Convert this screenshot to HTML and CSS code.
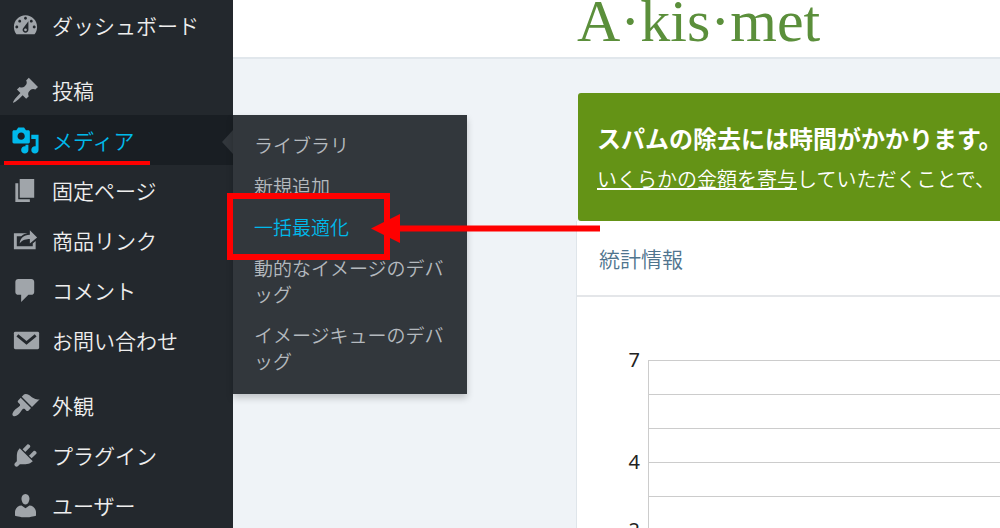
FILE: index.html
```html
<!DOCTYPE html>
<html lang="ja">
  <head>
    <meta charset="UTF-8" />
    <meta name="viewport" content="width=device-width, initial-scale=1.0" />
    <title>Akismet</title>
    <link rel="stylesheet" href="styles.css">
  </head>
  <body>
    <div class="page">
      <nav class="sidebar">
        <ul class="menu">
          <li>
            <a href="#" class="menu-link">
              <svg class="icon" viewBox="0 0 20 20"><path d="M3.76 16h12.48c1.1-1.37 1.76-3.11 1.76-5 0-4.42-3.58-8-8-8s-8 3.58-8 8c0 1.89.66 3.63 1.76 5zM10 4c.55 0 1 .45 1 1s-.45 1-1 1-1-.45-1-1 .45-1 1-1zM6 6c.55 0 1 .45 1 1s-.45 1-1 1-1-.45-1-1 .45-1 1-1zm8 0c.55 0 1 .45 1 1s-.45 1-1 1-1-.45-1-1 .45-1 1-1zm-5.37 5.55L12 7v6c0 1.1-.9 2-2 2s-2-.9-2-2c0-.57.24-1.08.63-1.45zM4 10c.55 0 1 .45 1 1s-.45 1-1 1-1-.45-1-1 .45-1 1-1zm12 0c.55 0 1 .45 1 1s-.45 1-1 1-1-.45-1-1 .45-1 1-1zm-5 3c0-.55-.45-1-1-1s-1 .45-1 1 .45 1 1 1 1-.45 1-1z" /></svg>
              ダッシュボード
            </a>
          </li>
          <li class="separator"></li>
          <li>
            <a href="#" class="menu-link">
              <svg class="icon" viewBox="0 0 20 20"><path d="M10.44 3.02l1.82-1.82 6.36 6.35-1.83 1.82c-1.05-.68-2.48-.57-3.41.36l-.75.75c-.92.93-1.04 2.35-.35 3.41l-1.83 1.82-2.41-2.41-2.8 2.79c-.42.42-3.38 2.71-3.8 2.29s1.86-3.39 2.28-3.81l2.79-2.79L4.1 9.36l1.83-1.82c1.05.69 2.48.57 3.4-.36l.75-.75c.93-.92 1.05-2.35.36-3.41z" /></svg>
              投稿
            </a>
          </li>
          <li class="open">
            <a href="#" class="menu-link">
              <svg class="icon" viewBox="0 0 20 20"><path d="M13 11V4c0-.55-.45-1-1-1h-1.67L9 1H5L3.67 3H2c-.55 0-1 .45-1 1v7c0 .55.45 1 1 1h10c.55 0 1-.45 1-1zM7 4.5c1.38 0 2.5 1.12 2.5 2.5S8.38 9.5 7 9.5 4.5 8.38 4.5 7 5.62 4.5 7 4.5zM14 6h5v10.5c0 1.38-1.12 2.5-2.5 2.5S14 17.88 14 16.5s1.12-2.5 2.5-2.5c.17 0 .34.02.5.05V9h-3V6zm-4 8.05V13h2v3.5c0 1.38-1.12 2.5-2.5 2.5S7 17.88 7 16.5 8.12 14 9.5 14c.17 0 .34.02.5.05z" /></svg>
              メディア
            </a>
            <ul class="submenu">
              <li><a href="#">ライブラリ</a></li>
              <li><a href="#">新規追加</a></li>
              <li><a href="#" class="active">一括最適化</a></li>
              <li><a href="#">動的なイメージのデバッグ</a></li>
              <li><a href="#">イメージキューのデバッグ</a></li>
            </ul>
          </li>
          <li>
            <a href="#" class="menu-link">
              <svg class="icon" viewBox="0 0 20 20"><path d="M6 15V2h10v13H6zm-1 1h8v2H3V5h2v11z" /></svg>
              固定ページ
            </a>
          </li>
          <li>
            <a href="#" class="menu-link">
              <svg class="icon" viewBox="0 0 20 20"><path d="M18 8l-5 4V9.01c-2.58.06-4.88.45-7 2.99.29-3.57 2.66-5.66 7-5.94V3zM4 14h11v-2l2-1.6V16H2V5h9.43c-1.83.32-3.31 1-4.41 2H4v7z" /></svg>
              商品リンク
            </a>
          </li>
          <li>
            <a href="#" class="menu-link">
              <svg class="icon" viewBox="0 0 20 20"><path d="M5 2h9c1.1 0 2 .9 2 2v7c0 1.1-.9 2-2 2h-2l-5 5v-5H5c-1.1 0-2-.9-2-2V4c0-1.1.9-2 2-2z" /></svg>
              コメント
            </a>
          </li>
          <li>
            <a href="#" class="menu-link">
              <svg class="icon" viewBox="0 0 20 20">
                <rect x="2" y="4" width="17.4" height="12" rx="1" />
                <path class="flap" d="M4.4 6.4l6.3 5.2L17 6.4" />
              </svg>
              お問い合わせ
            </a>
          </li>
          <li class="separator"></li>
          <li>
            <a href="#" class="menu-link">
              <svg class="icon" viewBox="0 0 20 20"><path d="M14.48 11.06L7.41 3.99l1.5-1.5c.5-.56 2.3-.47 3.51.32 1.21.8 1.43 1.28 2.91 2.1 1.18.64 2.45 1.26 4.45.85zm-.71.71L6.7 4.7 4.93 6.47c-.39.39-.39 1.02 0 1.41l1.06 1.06c.39.39.39 1.03 0 1.42-.6.6-1.43 1.11-2.21 1.69-.35.26-.7.53-1.01.84C1.43 14.23.4 16.08 1.4 17.07c.99 1 2.84-.03 4.18-1.36.31-.31.58-.66.85-1.02.57-.78 1.08-1.61 1.69-2.21.39-.39 1.02-.39 1.41 0l1.06 1.06c.39.39 1.02.39 1.41 0z" /></svg>
              外観
            </a>
          </li>
          <li>
            <a href="#" class="menu-link">
              <svg class="icon" viewBox="0 0 20 20"><path d="M13.11 4.36L9.87 7.6 8 5.73l3.24-3.24c.35-.34 1.05-.2 1.56.32.52.51.66 1.21.31 1.55zm-8 1.77l.91-1.12 9.01 9.01-1.19.84c-.71.71-2.63 1.16-3.82 1.16H6.14L4.9 17.26c-.59.59-1.54.59-2.12 0-.59-.58-.59-1.53 0-2.12l1.24-1.24v-3.88c0-1.13.4-3.19 1.09-3.89zm7.26 3.97l3.24-3.24c.34-.35 1.04-.21 1.55.31.52.51.66 1.21.31 1.55l-3.24 3.25z" /></svg>
              プラグイン
            </a>
          </li>
          <li>
            <a href="#" class="menu-link">
              <svg class="icon" viewBox="0 0 20 20"><path d="M10 9.25c-2.27 0-2.73-3.44-2.73-3.44C7 4.02 7.82 2 9.97 2c2.16 0 2.98 2.02 2.71 3.81 0 0-.41 3.44-2.68 3.44zm0 2.57L12.72 10c2.39 0 4.52 2.33 4.52 4.53v2.49s-3.65 1.13-7.24 1.13c-3.65 0-7.24-1.13-7.24-1.13v-2.49c0-2.25 1.94-4.48 4.47-4.48z" /></svg>
              ユーザー
            </a>
          </li>
        </ul>
      </nav>

      <main class="content">
        <header class="masthead">
          <div class="logo">A·kis·met</div>
        </header>

        <div class="column">
          <section class="notice">
            <h2>スパムの除去には時間がかかります。</h2>
            <p><a href="#">いくらかの金額を寄与</a>していただくことで、</p>
          </section>

          <section class="card">
            <h3>統計情報</h3>
            <div class="chart">
              <ul class="chart-labels">
                <li>7</li>
                <li></li>
                <li></li>
                <li>4</li>
                <li></li>
                <li>2</li>
              </ul>
              <div class="chart-plot">
                <div></div>
                <div></div>
                <div></div>
                <div></div>
                <div></div>
                <div></div>
              </div>
            </div>
          </section>
        </div>
      </main>
    </div>

    <!-- red marks over the menu -->
    <svg class="marks" width="600" height="270" viewBox="0 0 600 270">
      <path d="M4 163h146" stroke-width="4" />
      <rect x="230" y="196" width="157" height="61" stroke-width="6" />
      <path d="M398 228.5h202" stroke-width="6" />
      <path class="head" d="M371 228.5L400 214v29z" />
    </svg>
  </body>
</html>
```

FILE: styles.css
```css
* {
  box-sizing: border-box;
}
body {
  margin: 0;
  font-family: "Noto Sans", "Noto Sans CJK JP", sans-serif;
  font-size: 20px;
  font-weight: 350;
  background: #eff3f7;
}
ul {
  list-style: none;
  margin: 0;
  padding: 0;
}
a {
  color: inherit;
}
.page {
  display: flex;
  height: 100vh;
  overflow: hidden;
}

/* sidebar */
.sidebar {
  flex: 0 0 233px;
  background: #23282d;
  color: #eee;
}
.menu > li {
  position: relative;
}
.menu-link {
  display: flex;
  align-items: center;
  gap: 12px;
  height: 50px;
  padding-left: 11px;
  font-family: "Noto Sans CJK JP", sans-serif;
  font-size: 21px;
  text-decoration: none;
}
.menu .separator {
  height: 15px;
}
.icon {
  width: 29px;
  height: 29px;
  fill: #a0a5aa;
}
.flap {
  fill: none;
  stroke: #23282d;
  stroke-width: 2;
}
.open .menu-link {
  background: #191e23;
  color: #00b9eb;
}
.open .icon {
  fill: #00b9eb;
}
.open::after {
  content: "";
  position: absolute;
  top: 15px;
  right: 0;
  border: 12px solid transparent;
  border-left: 0;
  border-right: 11px solid #32373c;
}
.submenu {
  position: absolute;
  z-index: 1;
  top: 0;
  left: 100%;
  width: 234px;
  padding: 10px 0 12px;
  background: #32373c;
  box-shadow: 0 4px 7px rgba(0, 0, 0, 0.2);
}
.submenu a {
  display: block;
  padding: 7px 16px 8px 21px;
  color: #b4b9be;
  font-family: "Noto Sans CJK JP", sans-serif;
  font-size: 19px;
  line-height: 26px;
  text-decoration: none;
}
.submenu .active {
  color: #00b9eb;
}

/* content */
.content {
  flex: 1;
  min-width: 0;
  overflow: hidden;
}
.masthead {
  height: 59px;
  padding-left: 344px;
  background: #fff;
  border-bottom: 2px solid #e1e7ec;
}
.logo {
  color: #5b8f3b;
  font-family: "Liberation Serif", serif;
  font-size: 60px;
  font-weight: normal;
  line-height: 42px;
}
.column {
  margin-left: 343px;
  padding-top: 34px;
  white-space: nowrap;
}
.notice {
  height: 128px;
  margin-left: 2px;
  padding: 28px 0 0 19px;
  background: #649316;
  border-radius: 3px 0 0 3px;
  color: #fff;
}
.notice h2 {
  margin: 0;
  font-size: 24px;
  line-height: 36px;
}
.notice p {
  margin: 8px 0 0;
  line-height: 30px;
}
.card {
  background: #fff;
  border-left: 1px solid #dfe5ea;
}
.card h3 {
  margin: 0;
  padding: 22px 22px 20px;
  border-bottom: 2px solid #e4e6e9;
  color: #4f748e;
  font-size: 21px;
  font-weight: 350;
  line-height: 32px;
}
.chart {
  display: grid;
  grid-template-columns: 63px 1fr;
  gap: 8px;
  padding-top: 46px;
  color: #222;
  font-weight: normal;
}
.chart-labels li {
  height: 34px;
  line-height: 34px;
  text-align: right;
}
.chart-plot {
  margin-top: 17px;
  border-left: 1px solid #ccc;
}
.chart-plot div {
  height: 34px;
  border-top: 1px solid #ccc;
}

/* marks */
.marks {
  position: absolute;
  z-index: 2;
  top: 0;
  left: 0;
  fill: none;
  stroke: #f00;
  pointer-events: none;
}
.marks .head {
  fill: #f00;
  stroke: none;
}
```
